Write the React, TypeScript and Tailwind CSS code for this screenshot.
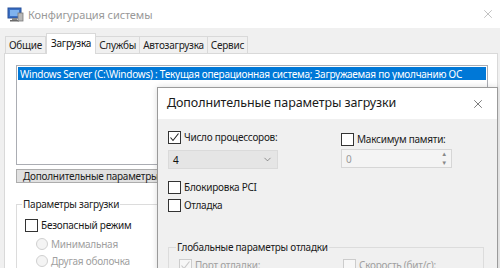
import { ChevronDown, X } from 'lucide-react';

function CheckBox({ checked, disabled, label, className }: { checked?: boolean; disabled?: boolean; label: string; className?: string }) {
    return (
        <div className={`flex items-center h-[14px] ${className ?? ''}`}>
            <div className={`w-[13px] h-[13px] border flex items-center justify-center ${disabled ? 'border-[#cccccc] bg-[#f7f7f7]' : 'border-[#333333] bg-white'}`}>
                {checked && (
                    <svg width="11" height="11" viewBox="0 0 11 11">
                        <path d="M1.5 5.5 L4 8.5 L9.5 1.5" fill="none" stroke={disabled ? '#c8c8c8' : '#222'} strokeWidth="1.1" />
                    </svg>
                )}
            </div>
            <span className={`ml-[3px] whitespace-nowrap ${disabled ? 'text-[#a0a0a0]' : 'text-[#1a1a1a]'}`}>{label}</span>
        </div>
    );
}

function Radio({ label }: { label: string }) {
    return (
        <div className="flex items-center h-[17px]">
            <div className="w-[12px] h-[12px] rounded-full border border-[#d0d0d0] bg-[#f4f4f4]" />
            <span className="ml-[3px] text-[#a0a0a0] whitespace-nowrap">{label}</span>
        </div>
    );
}

function AppIcon() {
    return (
        <svg width="17" height="15" viewBox="0 0 17 15">
            <rect x="1" y="1" width="13" height="10" fill="#3a6fc4" stroke="#26509a" />
            <rect x="3" y="3" width="9" height="6" fill="#7fb2ee" />
            <rect x="5" y="11" width="5" height="2" fill="#8a8a8a" />
            <rect x="3" y="13" width="9" height="1.5" fill="#6a6a6a" />
            <rect x="11" y="6" width="5" height="8" fill="#b8b8b8" stroke="#7a7a7a" strokeWidth="0.8" />
        </svg>
    );
}

const tabs = ['Общие', 'Загрузка', 'Службы', 'Автозагрузка', 'Сервис'];

export default function App() {
    return (
        <div className="relative w-[500px] h-[268px] overflow-hidden bg-[#f0f0f0] font-['Noto_Sans',sans-serif] text-[10px] tracking-[-0.25px] leading-none">
            {/* main window title */}
            <div className="h-[28px] bg-white flex items-center pl-[7px] pr-[5px]">
                <AppIcon />
                <span className="ml-[4px] text-[11px] tracking-[-0.1px] text-[#999999]">Конфигурация системы</span>
                <X className="ml-auto w-[14px] h-[14px] text-[#a0a0a0]" strokeWidth={1.1} />
            </div>

            <div className="pl-[4px] pr-[2px] pt-[4px]">
                {/* tabs */}
                <div className="flex items-end h-[21px] pl-[1px]">
                    {tabs.map((t) =>
                        t === 'Загрузка' ? (
                            <div key={t} className="relative z-10 -mb-px h-[21px] px-[4px] bg-white border border-b-0 border-[#d9d9d9] flex items-center pb-[2px] text-[#111]">{t}</div>
                        ) : (
                            <div key={t} className="h-[17px] px-[3px] bg-[#f0f0f0] border border-b-0 border-[#d9d9d9] -ml-px first:ml-0 flex items-center text-[#222]">{t}</div>
                        )
                    )}
                </div>

                {/* tab panel */}
                <div className="bg-white border border-[#d9d9d9] h-[230px] pl-[11px] pr-[9px] pt-[11px]">
                    <div className="border border-[#abadb3] h-[100px] p-px">
                        <div className="h-[13px] bg-[#0078d7] text-white pl-[2px] flex items-center whitespace-nowrap">
                            Windows Server (C:\Windows) : Текущая операционная система; Загружаемая по умолчанию ОС
                        </div>
                    </div>

                    <div className="mt-[4px] w-[180px] h-[14px] bg-[#e1e1e1] border border-[#adadad] flex items-center pl-[6px] text-[#222]">
                        Дополнительные параметры...
                    </div>

                    <div className="relative mt-[21px] border border-[#dcdcdc] w-[200px] h-[80px] pl-[8px] pt-[13px]">
                        <span className="absolute -top-[6px] left-[5px] bg-white px-px text-[#222]">Параметры загрузки</span>
                        <CheckBox label="Безопасный режим" />
                        <div className="pl-[11px] mt-[3px]">
                            <Radio label="Минимальная" />
                            <Radio label="Другая оболочка" />
                        </div>
                    </div>
                </div>
            </div>

            {/* dialog window */}
            <div className="absolute left-[157px] top-[87px] w-[341px] h-[200px] border border-[#9a9a9a] bg-[#f0f0f0] shadow-[0_0_6px_rgba(0,0,0,0.15)]">
                <div className="h-[31px] bg-white flex items-center pl-[9px] pr-[12px]">
                    <span className="text-[12.5px] tracking-[-0.1px] text-[#1a1a1a]">Дополнительные параметры загрузки</span>
                    <X className="ml-auto w-[14px] h-[14px] text-[#333]" strokeWidth={1.1} />
                </div>

                <div className="pl-[10px] pr-[13px] pt-[11px]">
                    <div className="grid grid-cols-[173px_1fr]">
                        <div>
                            <CheckBox checked label="Число процессоров:" />
                            <div className="mt-[6px] w-[110px] h-[19px] bg-[#e5e5e5] border border-[#dadada] flex items-center pl-[4px] pr-[4px] text-[#111]">
                                4
                                <ChevronDown className="ml-auto w-[11px] h-[11px] text-[#555]" strokeWidth={1.3} />
                            </div>
                            <CheckBox label="Блокировка PCI" className="mt-[11px]" />
                            <CheckBox label="Отладка" className="mt-[4px]" />
                        </div>
                        <div className="pt-[2px]">
                            <CheckBox label="Максимум памяти:" />
                            <div className="mt-[3px] w-[111px] h-[19px] bg-[#f4f4f4] border border-[#d6d6d6] flex items-center pl-[4px] text-[#9a9a9a]">
                                0
                                <div className="ml-auto w-[14px] h-full flex flex-col items-center justify-center gap-[3px] text-[6px] text-[#888]">
                                    <span>▲</span>
                                    <span>▼</span>
                                </div>
                            </div>
                        </div>
                    </div>

                    <div className="relative mt-[35px] border border-[#dcdcdc] h-[40px] pl-[10px] pt-[10px]">
                        <span className="absolute -top-[6px] left-[7px] bg-[#f0f0f0] px-px text-[#1a1a1a]">Глобальные параметры отладки</span>
                        <div className="grid grid-cols-[164px_1fr]">
                            <CheckBox disabled checked label="Порт отладки:" />
                            <CheckBox disabled label="Скорость (бит/с):" />
                        </div>
                    </div>
                </div>
            </div>
        </div>
    );
}
